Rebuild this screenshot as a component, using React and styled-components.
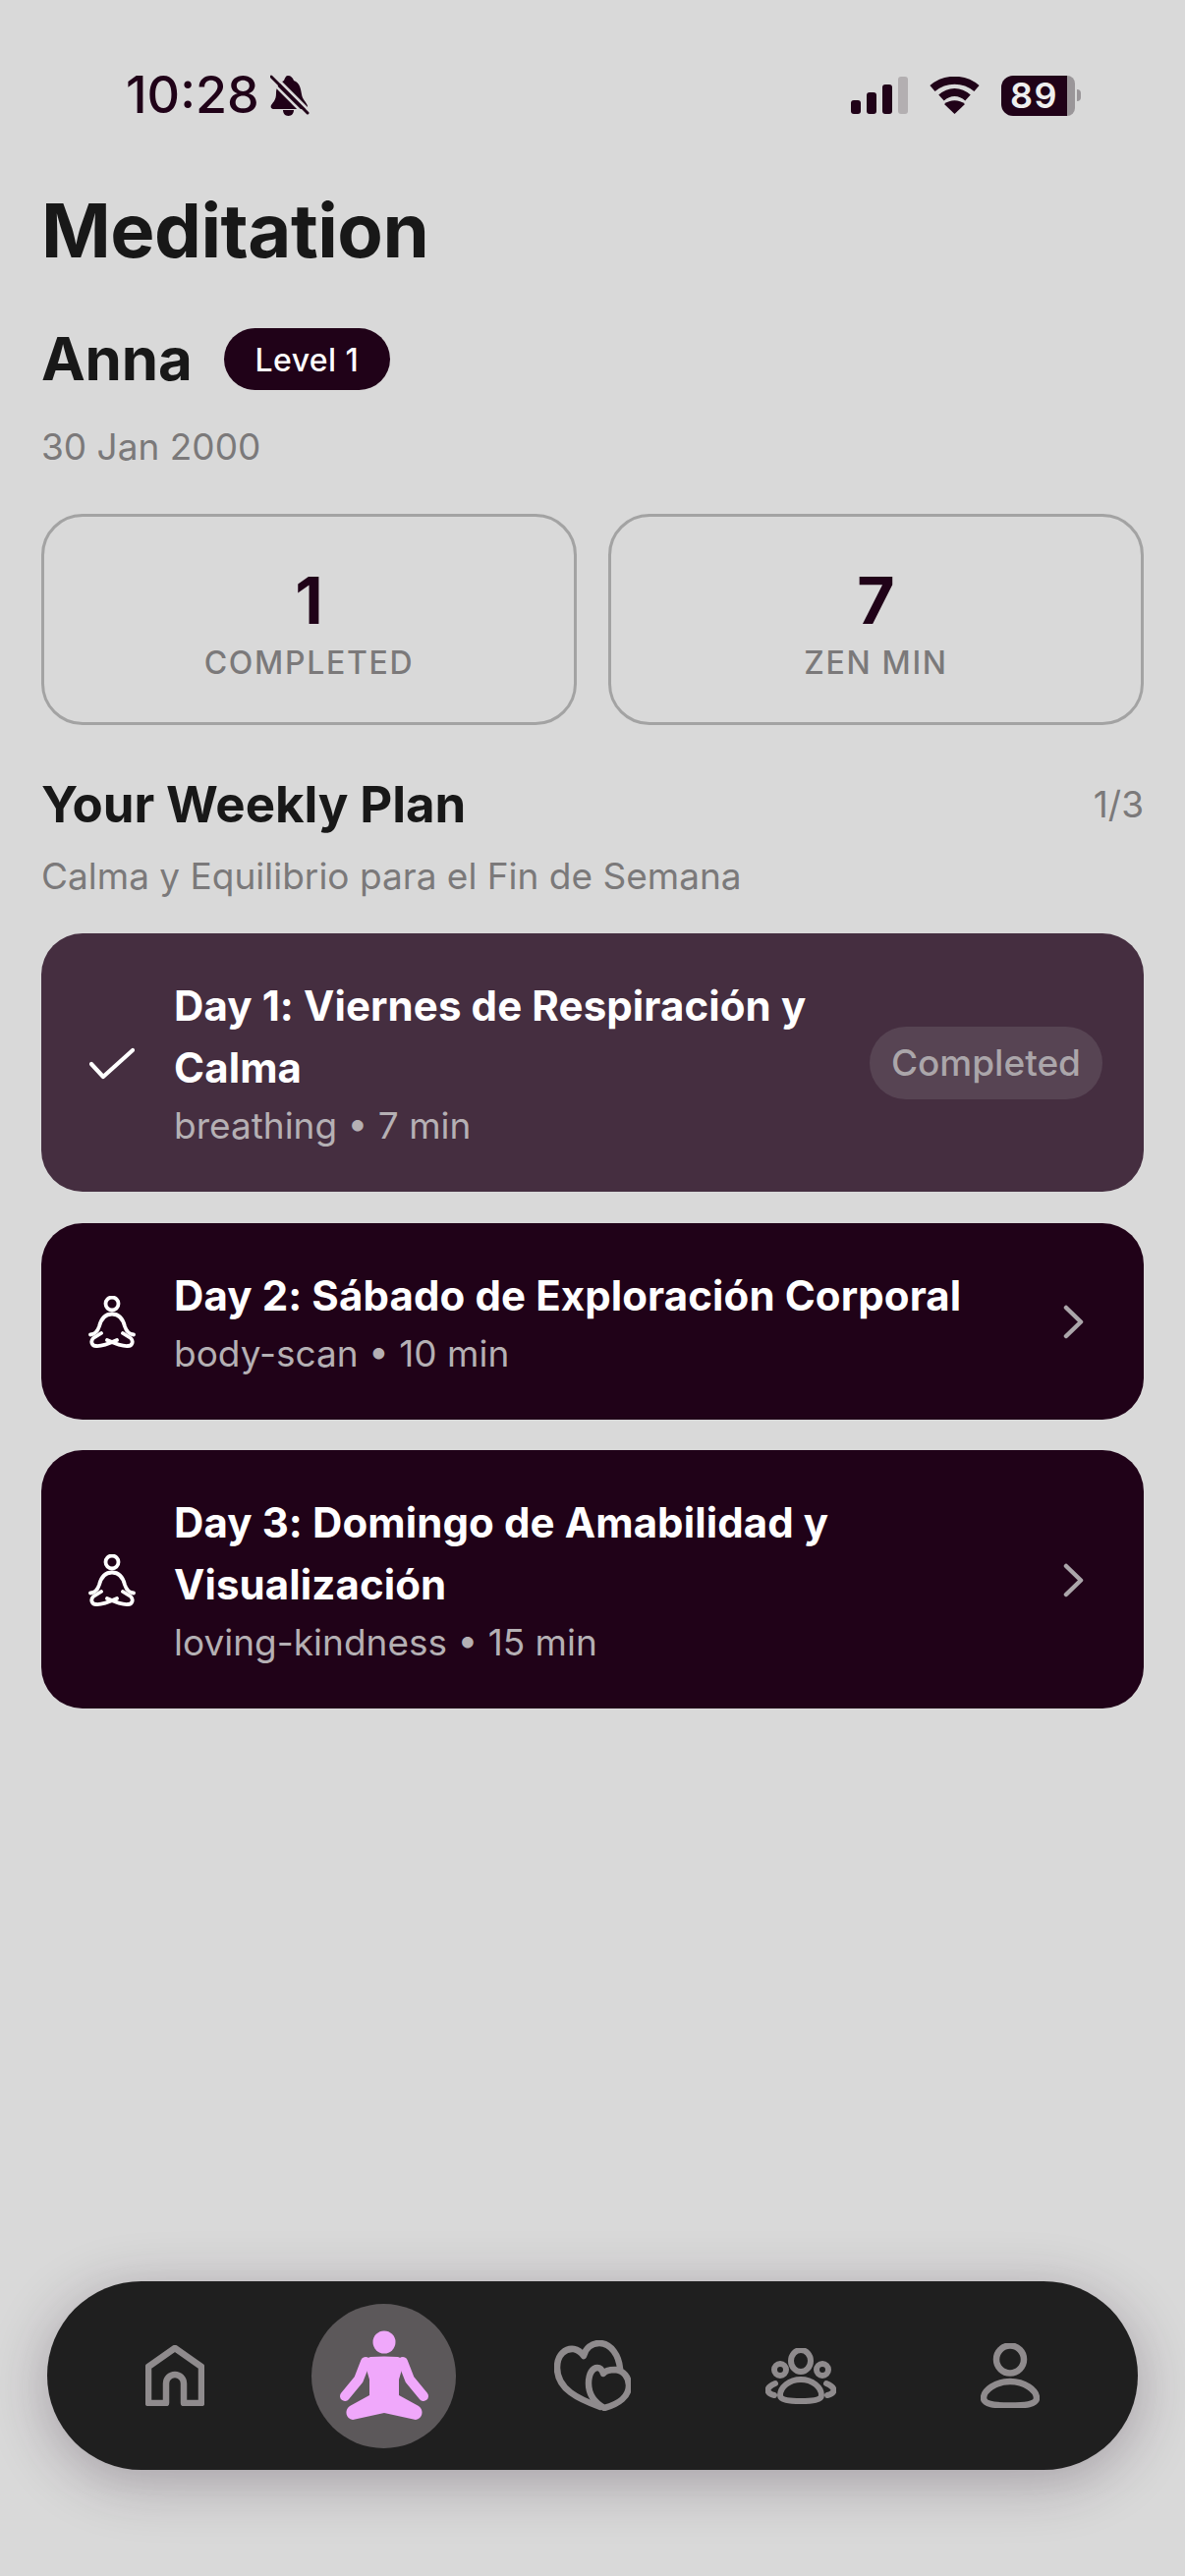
import styled, { createGlobalStyle } from 'styled-components';

const GlobalStyle = createGlobalStyle`
  * { box-sizing: border-box; }
  html, body { margin: 0; padding: 0; background: #d9d9d9; }
  body { font-family: Inter, "Liberation Sans", sans-serif; color: #181818; }
`;

const Page = styled.div`
  width: 1206px;
  height: 2622px;
  display: flex;
  flex-direction: column;
  padding: 76px 42px 108px;
  overflow: hidden;
`;

const StatusBar = styled.div`
  height: 42px;
  display: flex;
  align-items: center;
  justify-content: space-between;
  padding: 0 64px 0 86px;
  color: #200218;
`;

const StatusGroup = styled.div`
  display: flex;
  align-items: center;
  gap: ${(props) => props.gap || 14}px;
`;

const Time = styled.span`
  font-size: 52px;
  font-weight: 500;
  line-height: 42px;
`;

const Battery = styled.div`
  display: flex;
  align-items: center;
`;

const BatteryBody = styled.div`
  width: 67px;
  height: 41px;
  border-radius: 12px 0 0 12px;
  background: #200218;
  color: #eee;
  font-size: 36px;
  font-weight: 600;
  line-height: 41px;
  text-align: center;
  letter-spacing: 1.500px;
`;

const BatteryRest = styled.div`
  width: 8px;
  height: 41px;
  border-radius: 0 10px 10px 0;
  background: #9a9699;
`;

const BatteryNub = styled.div`
  width: 4px;
  height: 12px;
  margin-left: 2px;
  border-radius: 0 4px 4px 0;
  background: #9a9699;
`;

const Title = styled.h1`
  margin: 72px 0 0;
  font-size: 76px;
  font-weight: 700;
  line-height: 88px;
  letter-spacing: -0.5px;
  color: #181818;
`;

const NameRow = styled.div`
  margin-top: 52px;
  height: 70px;
  display: flex;
  align-items: center;
  gap: 32px;
`;

const Name = styled.div`
  font-size: 60px;
  font-weight: 700;
  letter-spacing: -0.2px;
  color: #181818;
`;

const LevelBadge = styled.div`
  height: 63px;
  padding: 1px 32px 0;
  border-radius: 32px;
  background: #200218;
  color: #fff;
  font-size: 32px;
  font-weight: 500;
  line-height: 63px;
  letter-spacing: 0.4px;
`;

const DateText = styled.div`
  margin-top: 33px;
  font-size: 37px;
  line-height: 44px;
  color: #7b797a;
`;

const Stats = styled.div`
  margin-top: 46px;
  display: grid;
  grid-template-columns: 1fr 1fr;
  gap: 32px;
`;

const StatCard = styled.div`
  height: 215px;
  border: 3px solid #a3a3a3;
  border-radius: 42px;
  display: flex;
  flex-direction: column;
  align-items: center;
  padding-top: 49px;
`;

const StatValue = styled.div`
  font-size: 66px;
  font-weight: 700;
  line-height: 72px;
  color: #200218;
`;

const StatLabel = styled.div`
  margin-top: 8px;
  font-size: 32px;
  font-weight: 500;
  line-height: 40px;
  letter-spacing: 1.700px;
  color: #7b797a;
`;

const SectionHeader = styled.div`
  margin-top: 48px;
  height: 64px;
  display: flex;
  align-items: center;
  justify-content: space-between;
`;

const SectionTitle = styled.h2`
  margin: 0;
  font-size: 51px;
  font-weight: 700;
  letter-spacing: -0.1px;
  color: #181818;
`;

const SectionCount = styled.span`
  font-size: 37px;
  color: #7b797a;
`;

const SectionSub = styled.div`
  margin-top: 20px;
  font-size: 37px;
  line-height: 44px;
  color: #7b797a;
`;

const DayList = styled.div`
  margin-top: 36px;
  display: flex;
  flex-direction: column;
  gap: 31.500px;
`;

const DayCard = styled.div`
  display: flex;
  align-items: center;
  padding: 42px 42px 40px 48px;
  border-radius: 42px;
  background: ${(props) => (props.$done ? '#452e40' : '#200218')};
  color: #fff;
`;

const DayIcon = styled.div`
  width: 48px;
  margin-right: 39px;
  flex-shrink: 0;
  display: flex;
  justify-content: center;
`;

const DayBody = styled.div`
  flex: 1;
  min-width: 0;
`;

const DayTitle = styled.div`
  max-width: ${(props) => props.$max || 700}px;
  font-size: 42px;
  font-weight: 650;
  line-height: 63px;
  letter-spacing: 0.1px;
`;

const DayMeta = styled.div`
  font-size: 37px;
  line-height: 55px;
  color: #b5b0b4;
`;

const CompletedBadge = styled.div`
  height: 74px;
  margin-top: -2px;
  padding: 0 22px;
  border-radius: 37px;
  background: #574453;
  color: #aba6aa;
  font-size: 37px;
  font-weight: 550;
  line-height: 74px;
`;

const Chevron = styled.svg`
  margin-right: 19px;
  flex-shrink: 0;
`;

const BottomNav = styled.nav`
  margin: auto 6px 0;
  height: 192px;
  padding: 0 24px;
  border-radius: 96px;
  background: #1f1f1f;
  display: grid;
  grid-template-columns: repeat(5, 1fr);
  align-items: center;
  justify-items: center;
  box-shadow: 0 12px 60px rgba(40, 20, 40, 0.3);
`;

const NavItem = styled.div`
  width: 147px;
  height: 147px;
  border-radius: 50%;
  display: flex;
  align-items: center;
  justify-content: center;
  background: ${(props) => (props.$active ? '#5c585a' : 'transparent')};
`;

function BellOff() {
  return (
    <svg width="40" height="42" viewBox="0 0 40 42">
      <path
        fill="#200218"
        d="M18 1c3 0 5 2 6 5 6 2 7 8 8 14 .5 5 5 8 6 12 0 2-1 3-3 3H4c-3 0-4-2-3-4 2-3 5-5 5-12 0-6 3-11 8-13 1-3 2-5 4-5zM13 36h11c0 3-2 6-5.500 6S13 39 13 36z"
      />
      <path d="M0 4 L37 41" stroke="#d9d9d9" strokeWidth="3" transform="translate(3.500 -3.500)" />
      <path d="M1 2 L38 39" stroke="#200218" strokeWidth="3" strokeLinecap="round" />
      <path d="M-1 5 L34 40" stroke="#d9d9d9" strokeWidth="2.500" />
    </svg>
  );
}

function SignalBars() {
  return (
    <svg width="58" height="38" viewBox="0 0 58 38">
      <rect x="0" y="24" width="10" height="14" rx="3" fill="#200218" />
      <rect x="16" y="16" width="10" height="22" rx="3" fill="#200218" />
      <rect x="32" y="8" width="10" height="30" rx="3" fill="#200218" />
      <rect x="48" y="0" width="10" height="38" rx="3" fill="#b3afb1" />
    </svg>
  );
}

function Wifi() {
  return (
    <svg width="51" height="38" viewBox="0 0 51 38" fill="none" stroke="#200218" strokeWidth="8">
      <path d="M3 12 C16 1 35 1 48 12" />
      <path d="M12 21.500 C20 14 31 14 39 21.500" />
      <path d="M25.500 38 L15 28 C21 23 30 23 36 28 Z" fill="#200218" stroke="none" />
    </svg>
  );
}

function Meditate() {
  return (
    <svg width="48" height="53" viewBox="0 0 48 53" fill="none" stroke="#fff" strokeWidth="3.800" strokeLinecap="round" strokeLinejoin="round">
      <circle cx="24" cy="8" r="6.500" />
      <path d="M2 39.500 C7 39 9.500 36 11 31 C13 23 17 18.500 24 18.500 C31 18.500 35 23 37 31 C38.500 36 41 39 46 39.500" />
      <path d="M13 38 L5 43 C2 46 3 51 8 51 C14 51.500 20 49 29 45" />
      <path d="M35 38 L43 43 C46 46 45 51 40 51 C34 51.500 28 49 19 45" />
    </svg>
  );
}

function CheckMark() {
  return (
    <svg width="46" height="34" viewBox="0 0 46 34" fill="none" stroke="#fff" strokeWidth="4.200" strokeLinecap="round" strokeLinejoin="round">
      <path d="M2 17 L14 30 L44 3" />
    </svg>
  );
}

function ChevronRight() {
  return (
    <Chevron width="21" height="35" viewBox="0 0 21 35" fill="none" stroke="#aba6aa" strokeWidth="4.500" strokeLinecap="round" strokeLinejoin="round">
      <path d="M3 3 L18 17.500 L3 32" />
    </Chevron>
  );
}

const navStroke = { fill: 'none', stroke: '#8f8b8d', strokeWidth: 6.500, strokeLinecap: 'round', strokeLinejoin: 'round' };

function HomeIcon() {
  return (
    <svg width="60" height="62" viewBox="0 0 60 62" {...navStroke}>
      <path d="M3 59 V22 L30 3 L57 22 V59 H39 V39 A9 9 0 0 0 21 39 V59 Z" />
    </svg>
  );
}

function SittingFigure() {
  return (
    <svg width="92" height="92" viewBox="-1 0 92 92" fill="#f0a8fb">
      <circle cx="45" cy="12" r="11.500" />
      <path d="M31 27 Q45 26 59 27 Q63 28 65 33 L60 50 V66 L80 77 C86 81 84 90 77 91 L45 84 L13 91 C6 90 4 81 10 77 L30 66 V50 L25 33 Q27 28 31 27 Z" />
      <path d="M26 32 L19 50 L5 67 M64 32 L71 50 L85 67" fill="none" stroke="#f0a8fb" strokeWidth="10" strokeLinecap="round" strokeLinejoin="round" />
    </svg>
  );
}

function HeartsIcon() {
  return (
    <svg width="78" height="72" viewBox="0 0 78 72" {...navStroke}>
      <path d="M47 68 C25 60 3 50 3 28 C3 14 12 8 20 9 C25 10 28 13 30 16 C32 8 38 3 46 3 C58 3 66 16 67 29" />
      <path d="M51 69 C42 64 35 57 35 44 C35 34 39 28 44 28 C47 28 49 31 50 34 C52 31 57 30 62 30 C71 31 76 38 76 46 C76 57 66 65 51 69 Z" />
    </svg>
  );
}

function GroupIcon() {
  return (
    <svg width="72" height="57" viewBox="0 0 72 57" {...navStroke} strokeWidth="6">
      <ellipse cx="36" cy="13" rx="10" ry="11" />
      <circle cx="15" cy="22" r="6" />
      <circle cx="58" cy="22" r="6" />
      <path d="M36 32 C24 32 15 40 15 48 C15 53 24 54 36 54 C48 54 57 53 57 48 C57 40 48 32 36 32 Z" />
      <path d="M10 36 C5 38 2.500 41 2.500 43 C2.500 45 5 47 9 48" />
      <path d="M62 36 C67 38 69.500 41 69.500 43 C69.500 45 67 47 63 48" />
    </svg>
  );
}

function PersonIcon() {
  return (
    <svg width="60" height="66" viewBox="0 0 60 66" {...navStroke}>
      <circle cx="30" cy="16.500" r="14" />
      <path d="M30 39 C15 39 3 48 3 56 C3 62 14 63.500 30 63.500 C46 63.500 57 62 57 56 C57 48 45 39 30 39 Z" />
    </svg>
  );
}

const days = [
  { title: 'Day 1: Viernes de Respiración y Calma', meta: 'breathing • 7 min', done: true, max: 700 },
  { title: 'Day 2: Sábado de Exploración Corporal', meta: 'body-scan • 10 min', max: 860 },
  { title: 'Day 3: Domingo de Amabilidad y Visualización', meta: 'loving-kindness • 15 min', max: 700 },
];

export default function App() {
  return (
    <>
      <GlobalStyle />
      <Page>
        <StatusBar>
          <StatusGroup gap={11}>
            <Time>10:28</Time>
            <BellOff />
          </StatusGroup>
          <StatusGroup gap={22}>
            <SignalBars />
            <Wifi />
            <Battery>
              <BatteryBody>89</BatteryBody>
              <BatteryRest />
              <BatteryNub />
            </Battery>
          </StatusGroup>
        </StatusBar>

        <Title>Meditation</Title>
        <NameRow>
          <Name>Anna</Name>
          <LevelBadge>Level 1</LevelBadge>
        </NameRow>
        <DateText>30 Jan 2000</DateText>

        <Stats>
          <StatCard>
            <StatValue>1</StatValue>
            <StatLabel>COMPLETED</StatLabel>
          </StatCard>
          <StatCard>
            <StatValue>7</StatValue>
            <StatLabel>ZEN MIN</StatLabel>
          </StatCard>
        </Stats>

        <SectionHeader>
          <SectionTitle>Your Weekly Plan</SectionTitle>
          <SectionCount>1/3</SectionCount>
        </SectionHeader>
        <SectionSub>Calma y Equilibrio para el Fin de Semana</SectionSub>

        <DayList>
          {days.map((day) => (
            <DayCard key={day.title} $done={day.done}>
              <DayIcon>{day.done ? <CheckMark /> : <Meditate />}</DayIcon>
              <DayBody>
                <DayTitle $max={day.max}>{day.title}</DayTitle>
                <DayMeta>{day.meta}</DayMeta>
              </DayBody>
              {day.done ? <CompletedBadge>Completed</CompletedBadge> : <ChevronRight />}
            </DayCard>
          ))}
        </DayList>

        <BottomNav>
          <NavItem><HomeIcon /></NavItem>
          <NavItem $active><SittingFigure /></NavItem>
          <NavItem><HeartsIcon /></NavItem>
          <NavItem><GroupIcon /></NavItem>
          <NavItem><PersonIcon /></NavItem>
        </BottomNav>
      </Page>
    </>
  );
}
